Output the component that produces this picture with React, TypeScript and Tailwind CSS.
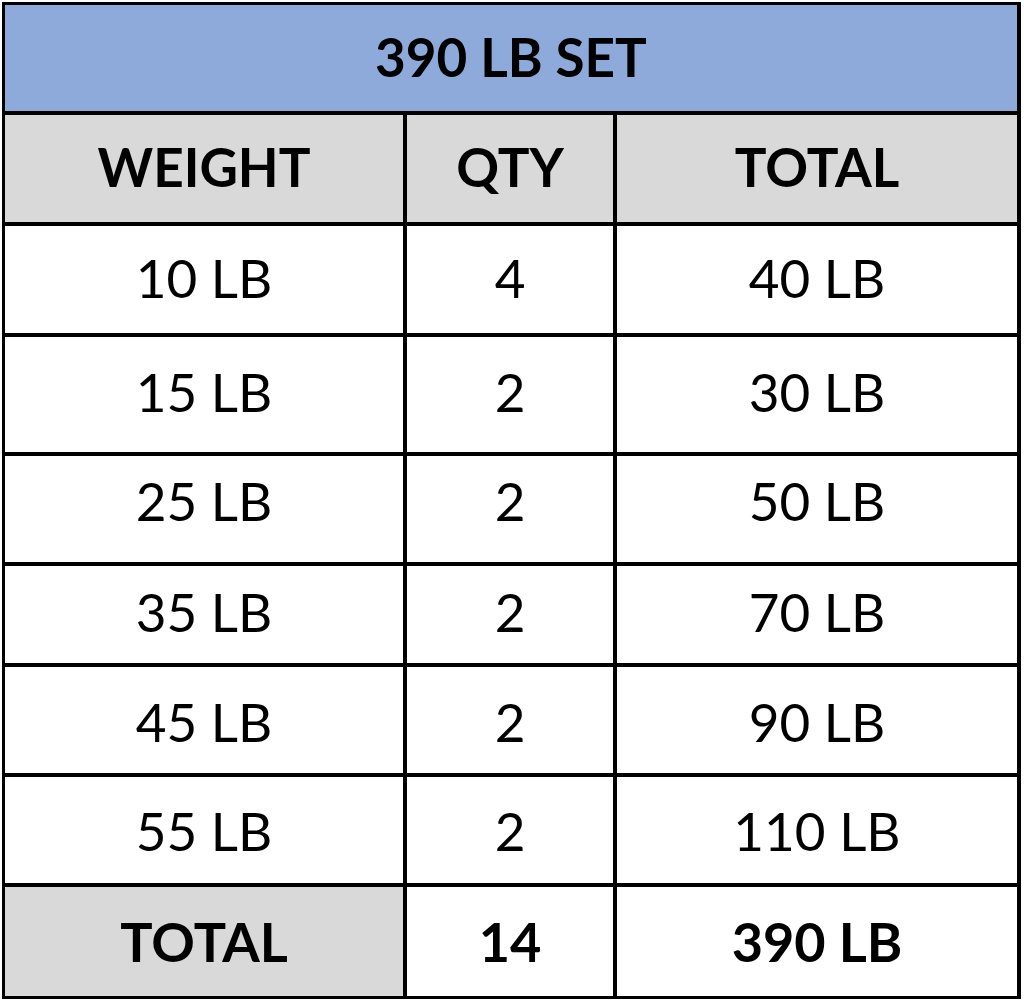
const rows = [
  { vals: ["10 LB", "4", "40 LB"], nudge: "pb-[4px]" },
  { vals: ["15 LB", "2", "30 LB"], nudge: "pb-[6px]" },
  { vals: ["25 LB", "2", "50 LB"], nudge: "pb-[16px]" },
  { vals: ["35 LB", "2", "70 LB"], nudge: "pb-[6px]" },
  { vals: ["45 LB", "2", "90 LB"], nudge: "pt-[3px]" },
  { vals: ["55 LB", "2", "110 LB"], nudge: "pt-[2px]" },
];

const cell = "flex items-center justify-center";

export default function App() {
  return (
    <div className="w-[1024px] h-[1003px] bg-white pt-[2px] pl-[2px] font-['Lato',_'Liberation_Sans',_sans-serif] text-black">
      <div className="w-[1019px] grid grid-cols-[398px_206px_400px] grid-rows-[106px_107px_107px_115px_106px_97px_106px_106px_109px] gap-[4px] p-[3px] bg-black">
        <div className={`${cell} col-span-3 bg-[#8eaadb] text-[53px] font-bold pb-[3px]`}>390 LB SET</div>

        <div className={`${cell} bg-[#d9d9d9] text-[53px] font-bold pb-[3px]`}>WEIGHT</div>
        <div className={`${cell} bg-[#d9d9d9] text-[53px] font-bold pb-[3px]`}>QTY</div>
        <div className={`${cell} bg-[#d9d9d9] text-[53px] font-bold pb-[3px]`}>TOTAL</div>

        {rows.map((r) =>
          r.vals.map((v, i) => (
            <div key={r.vals[0] + i} className={`${cell} bg-white text-[53px] ${r.nudge}`}>
              {v}
            </div>
          ))
        )}

        <div className={`${cell} bg-[#d9d9d9] text-[54px] font-bold`}>TOTAL</div>
        <div className={`${cell} bg-white text-[54px] font-bold`}>14</div>
        <div className={`${cell} bg-white text-[54px] font-bold`}>390 LB</div>
      </div>
    </div>
  );
}
